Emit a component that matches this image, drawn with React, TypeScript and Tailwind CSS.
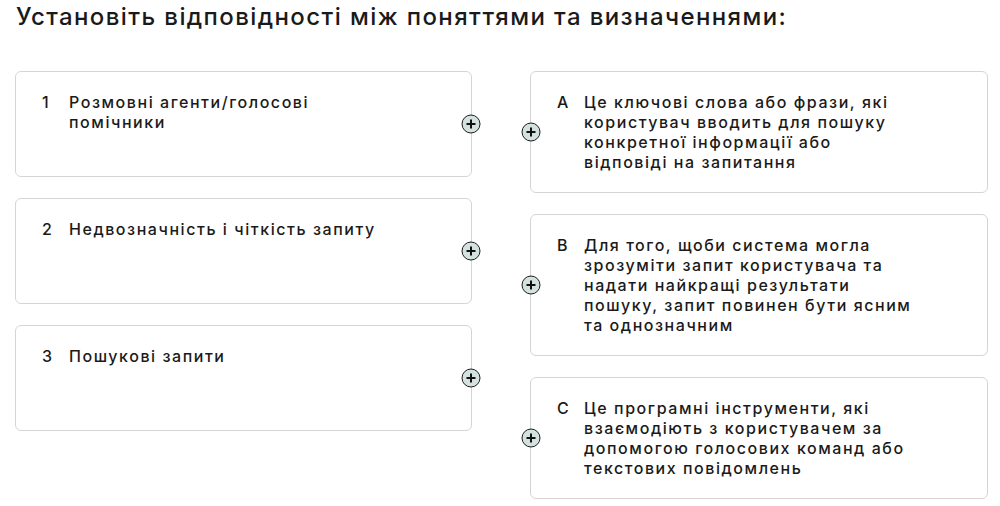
import React from "react";

type Item = { key: string; lines: string[] };

const concepts: Item[] = [
  { key: "1", lines: ["Розмовні агенти/голосові", "помічники"] },
  { key: "2", lines: ["Недвозначність і чіткість запиту"] },
  { key: "3", lines: ["Пошукові запити"] },
];

const definitions: Item[] = [
  {
    key: "A",
    lines: [
      "Це ключові слова або фрази, які",
      "користувач вводить для пошуку",
      "конкретної інформації або",
      "відповіді на запитання",
    ],
  },
  {
    key: "B",
    lines: [
      "Для того, щоби система могла",
      "зрозуміти запит користувача та",
      "надати найкращі результати",
      "пошуку, запит повинен бути ясним",
      "та однозначним",
    ],
  },
  {
    key: "C",
    lines: [
      "Це програмні інструменти, які",
      "взаємодіють з користувачем за",
      "допомогою голосових команд або",
      "текстових повідомлень",
    ],
  },
];

function PlusDot({ side }: { side: "left" | "right" }) {
  return (
    <span
      className={`absolute top-1/2 -translate-y-1/2 ${
        side === "right" ? "right-0 translate-x-1/2" : "left-0 -translate-x-1/2"
      } flex h-[19px] w-[19px] items-center justify-center rounded-full border-[1.5px] border-[#1c1c1c] bg-[#d4e2df]`}
    >
      <svg width="11" height="11" viewBox="0 0 11 11">
        <path d="M5.5 1v9M1 5.5h9" stroke="#111" strokeWidth="2" />
      </svg>
    </span>
  );
}

function Card({ item, side, minH }: { item: Item; side: "left" | "right"; minH?: boolean }) {
  return (
    <div
      className={`relative rounded-md border border-[#d5d5d5] bg-white pl-[26px] pr-4 pt-5 pb-5 ${
        minH ? "min-h-[106px]" : ""
      }`}
    >
      <div className="flex text-[16px] leading-5 tracking-[1.55px] text-[#1a1a1a]">
        <span className="w-[27px] shrink-0">{item.key}</span>
        <div>
          {item.lines.map((l) => (
            <div key={l} className="whitespace-nowrap">
              {l}
            </div>
          ))}
        </div>
      </div>
      <PlusDot side={side === "left" ? "right" : "left"} />
    </div>
  );
}

export default function App() {
  return (
    <div className="min-h-[506px] bg-white px-[15px] pt-[1px] font-['Inter',sans-serif] font-medium text-[#1a1a1a]">
      <h1 className="pl-[1px] text-[24px] leading-8 font-medium tracking-[1.4px]">
        Установіть відповідності між поняттями та визначеннями:
      </h1>
      <div className="mt-[38px] grid grid-cols-[457px_458px] gap-x-[58px]">
        <div className="flex flex-col gap-[21px]">
          {concepts.map((c) => (
            <Card key={c.key} item={c} side="left" minH />
          ))}
        </div>
        <div className="flex flex-col gap-[21px]">
          {definitions.map((d) => (
            <Card key={d.key} item={d} side="right" />
          ))}
        </div>
      </div>
    </div>
  );
}
